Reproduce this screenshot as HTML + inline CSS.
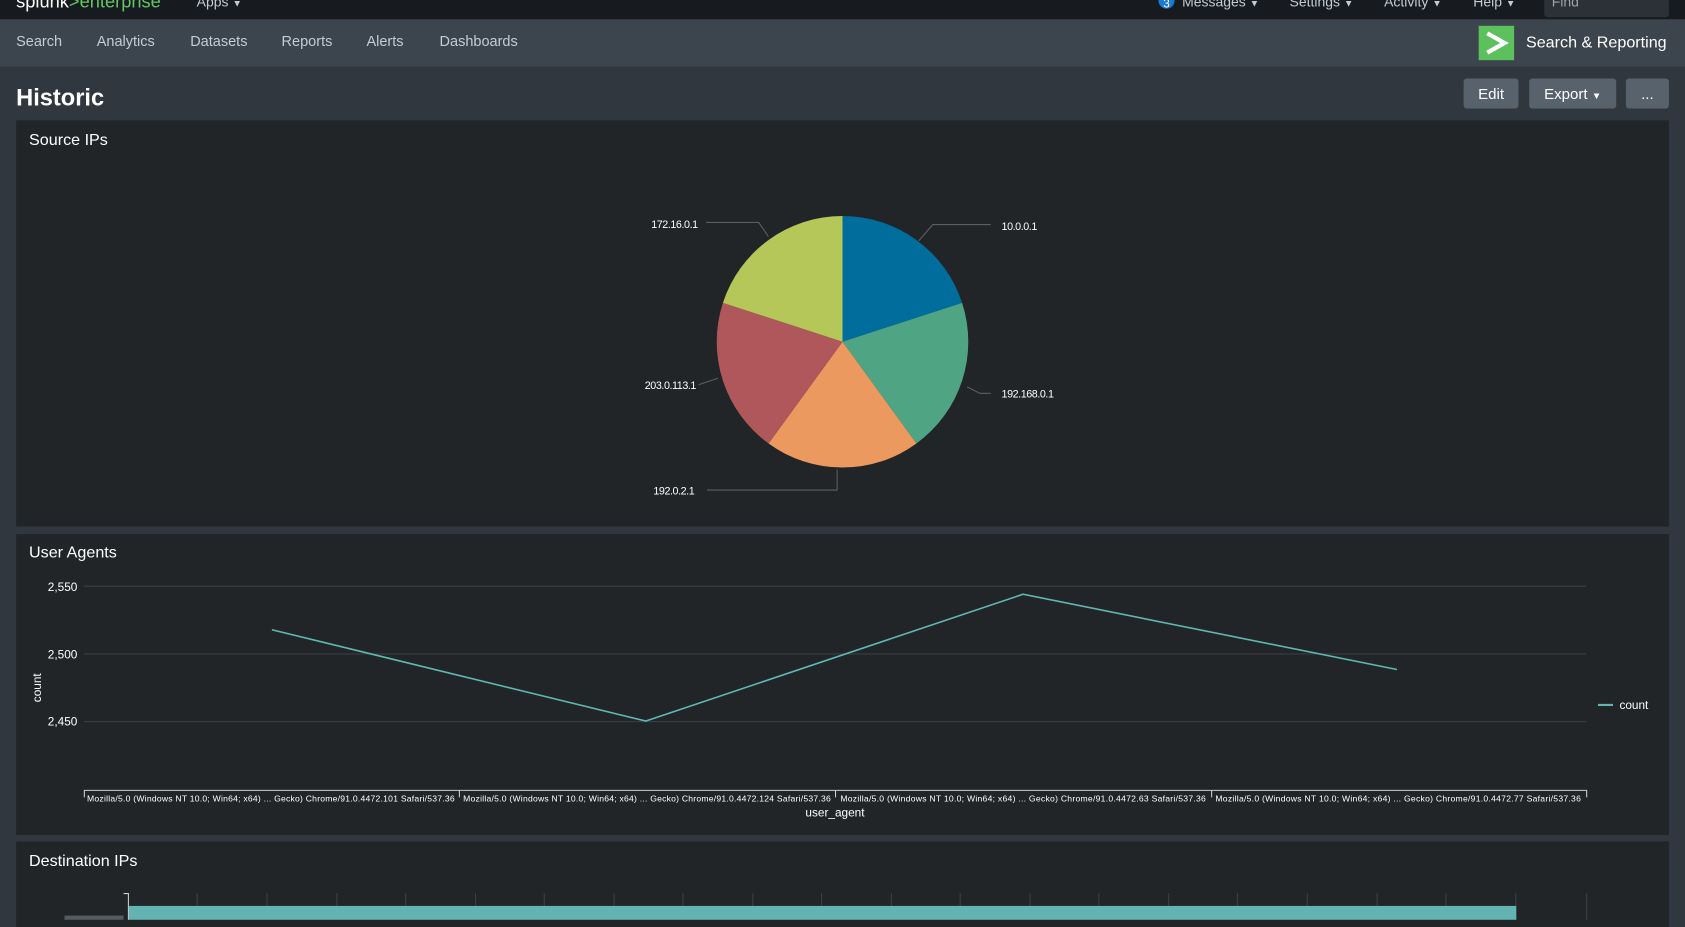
<!DOCTYPE html>
<html><head><meta charset="utf-8"><style>
*{margin:0;padding:0;box-sizing:border-box}
html,body{width:1685px;height:920px;overflow:hidden;background:#31373e;font-family:"Liberation Sans",sans-serif}
#w{position:absolute;left:0;top:0;width:1568px;height:856px;transform:scale(1.07462);transform-origin:0 0;background:#31373e}
.a{position:absolute;white-space:nowrap}
.top{left:0;top:0;width:1568px;height:18px;background:#171b1f}
.nav{left:0;top:18px;width:1568px;height:44px;background:#3c444d}
.ni{top:31px;font-size:13.5px;color:#c3cbd4}
.tt{font-size:13px;color:#c3cbd4;top:-6px}
.btn{background:#58626d;border-radius:3px;color:#fff;font-size:14px;text-align:center;line-height:28px;top:73px;height:28px}
.panel{background:#212527;left:15px;width:1538px}
.ptitle{font-size:15px;color:#fff}
</style></head><body><div id="w">
<div class="a top"></div>
<div class="a" style="left:15px;top:-8px;font-size:17px;color:#fff">splunk<span style="color:#65c466">&gt;enterprise</span></div>
<div class="a tt" style="left:183px">Apps <span style="font-size:9px">▼</span></div>
<div class="a" style="left:1078px;top:-7px;width:15px;height:15px;border-radius:50%;background:#1a7bd0;color:#fff;font-size:11px;text-align:center;line-height:22px">3</div>
<div class="a tt" style="left:1100px">Messages <span style="font-size:9px">▼</span></div>
<div class="a tt" style="left:1200px">Settings <span style="font-size:9px">▼</span></div>
<div class="a tt" style="left:1288px">Activity <span style="font-size:9px">▼</span></div>
<div class="a tt" style="left:1371px">Help <span style="font-size:9px">▼</span></div>
<div class="a" style="left:1437px;top:-4px;width:116px;height:20px;background:#2b3136;border-radius:3px"></div>
<div class="a tt" style="left:1444px;color:#9aa3ad">Find</div>
<div class="a nav"></div>
<div class="a ni" style="left:15px">Search</div>
<div class="a ni" style="left:90px">Analytics</div>
<div class="a ni" style="left:177px">Datasets</div>
<div class="a ni" style="left:262px">Reports</div>
<div class="a ni" style="left:341px">Alerts</div>
<div class="a ni" style="left:409px">Dashboards</div>
<div class="a" style="left:1376px;top:24px;width:33px;height:32px;background:#5cc05c"><svg width="33" height="32"><path d="M8 7 L24 16 L8 25" stroke="#fff" stroke-width="4" fill="none"/></svg></div>
<div class="a" style="left:1420px;top:31px;font-size:15px;color:#fff">Search &amp; Reporting</div>
<div class="a" style="left:15px;top:78px;font-size:22px;font-weight:bold;color:#fff">Historic</div>
<div class="a btn" style="left:1362px;width:51px">Edit</div>
<div class="a btn" style="left:1423px;width:81px">Export <span style="font-size:9px">▼</span></div>
<div class="a btn" style="left:1513px;width:40px">...</div>

<div class="a panel" style="top:112px;height:378px"></div>
<div class="a ptitle" style="left:27px;top:122px">Source IPs</div>
<svg class="a" style="left:0;top:0" width="1568" height="856">
<g stroke="#5a5f63" fill="none" stroke-width="1">
<path d="M855 224 L868 209 L922 209"/><path d="M900 360 L912 366 L922 366"/>
<path d="M779 437 L779 456 L658 456"/><path d="M668 352 L650 358"/>
<path d="M715 220 L706 207 L657 207"/></g>
<path d="M784 318 L784 201 A117 117 0 0 1 895.3 281.8Z" fill="#006d9c"/>
<path d="M784 318 L895.3 281.8 A117 117 0 0 1 852.8 412.7Z" fill="#4fa484"/>
<path d="M784 318 L852.8 412.7 A117 117 0 0 1 715.2 412.7Z" fill="#ec9960"/>
<path d="M784 318 L715.2 412.7 A117 117 0 0 1 672.7 281.8Z" fill="#af575a"/>
<path d="M784 318 L672.7 281.8 A117 117 0 0 1 784 201Z" fill="#b6c75a"/>
<g fill="#fff" font-size="10" font-family="Liberation Sans" letter-spacing="-0.4">
<text x="932" y="214">10.0.0.1</text><text x="932" y="370">192.168.0.1</text>
<text x="608" y="460">192.0.2.1</text><text x="600" y="362">203.0.113.1</text>
<text x="606" y="212">172.16.0.1</text></g>
</svg>

<div class="a panel" style="top:497px;height:280px"></div>
<div class="a ptitle" style="left:27px;top:506px">User Agents</div>
<svg class="a" style="left:0;top:0" width="1568" height="856">
<g stroke="#3a3f44"><path d="M78 545.5H1476M78 608.5H1476M78 671.5H1476"/></g>
<g fill="#fff" font-size="11" font-family="Liberation Sans" text-anchor="end">
<text x="72" y="550">2,550</text><text x="72" y="613">2,500</text><text x="72" y="675">2,450</text></g>
<text x="38" y="640" fill="#fff" font-size="11" font-family="Liberation Sans" text-anchor="middle" transform="rotate(-90 38 640)">count</text>
<path d="M78 735.5H1476M78.5 735V742M427.5 735V742M777.5 735V742M1127.5 735V742M1476.5 735V742" stroke="#ccc"/>
<polyline points="253,586 601,671 952,553 1300,623" fill="none" stroke="#5fb7b3" stroke-width="1.5"/>
<path d="M1487 656H1501" stroke="#5fb7b3" stroke-width="2"/>
<text x="1507" y="660" fill="#fff" font-size="11" font-family="Liberation Sans">count</text>
<g fill="#fff" font-size="8" font-family="Liberation Sans" text-anchor="middle" letter-spacing="-0.1">
<text x="252" y="746" textLength="342">Mozilla/5.0 (Windows NT 10.0; Win64; x64) ... Gecko) Chrome/91.0.4472.101 Safari/537.36</text>
<text x="602" y="746" textLength="342">Mozilla/5.0 (Windows NT 10.0; Win64; x64) ... Gecko) Chrome/91.0.4472.124 Safari/537.36</text>
<text x="952" y="746" textLength="340">Mozilla/5.0 (Windows NT 10.0; Win64; x64) ... Gecko) Chrome/91.0.4472.63 Safari/537.36</text>
<text x="1301" y="746" textLength="340">Mozilla/5.0 (Windows NT 10.0; Win64; x64) ... Gecko) Chrome/91.0.4472.77 Safari/537.36</text>
<text x="777" y="760" font-size="11" letter-spacing="0">user_agent</text></g>
</svg>

<div class="a panel" style="top:783px;height:80px"></div>
<div class="a ptitle" style="left:27px;top:793px">Destination IPs</div>
<svg class="a" style="left:0;top:0" width="1568" height="856">
<g stroke="#3a3f44">
<path d="M183.5 831V856M248.5 831V856M313.5 831V856M377.5 831V856M442.5 831V856M506.5 831V856M571.5 831V856M635.5 831V856M700.5 831V856M764.5 831V856M829.5 831V856M893.5 831V856M958.5 831V856M1022.5 831V856M1087.5 831V856M1151.5 831V856M1216.5 831V856M1281.5 831V856M1345.5 831V856M1410.5 831V856M1476.5 831V856"/></g>
<path d="M115 831.5H119.5V856" stroke="#ccc" fill="none"/>
<rect x="120" y="843" width="1291" height="13" fill="#62b3b2"/>
<rect x="60" y="852" width="55" height="4" fill="#555b61"/>
</svg>
</div></body></html>
